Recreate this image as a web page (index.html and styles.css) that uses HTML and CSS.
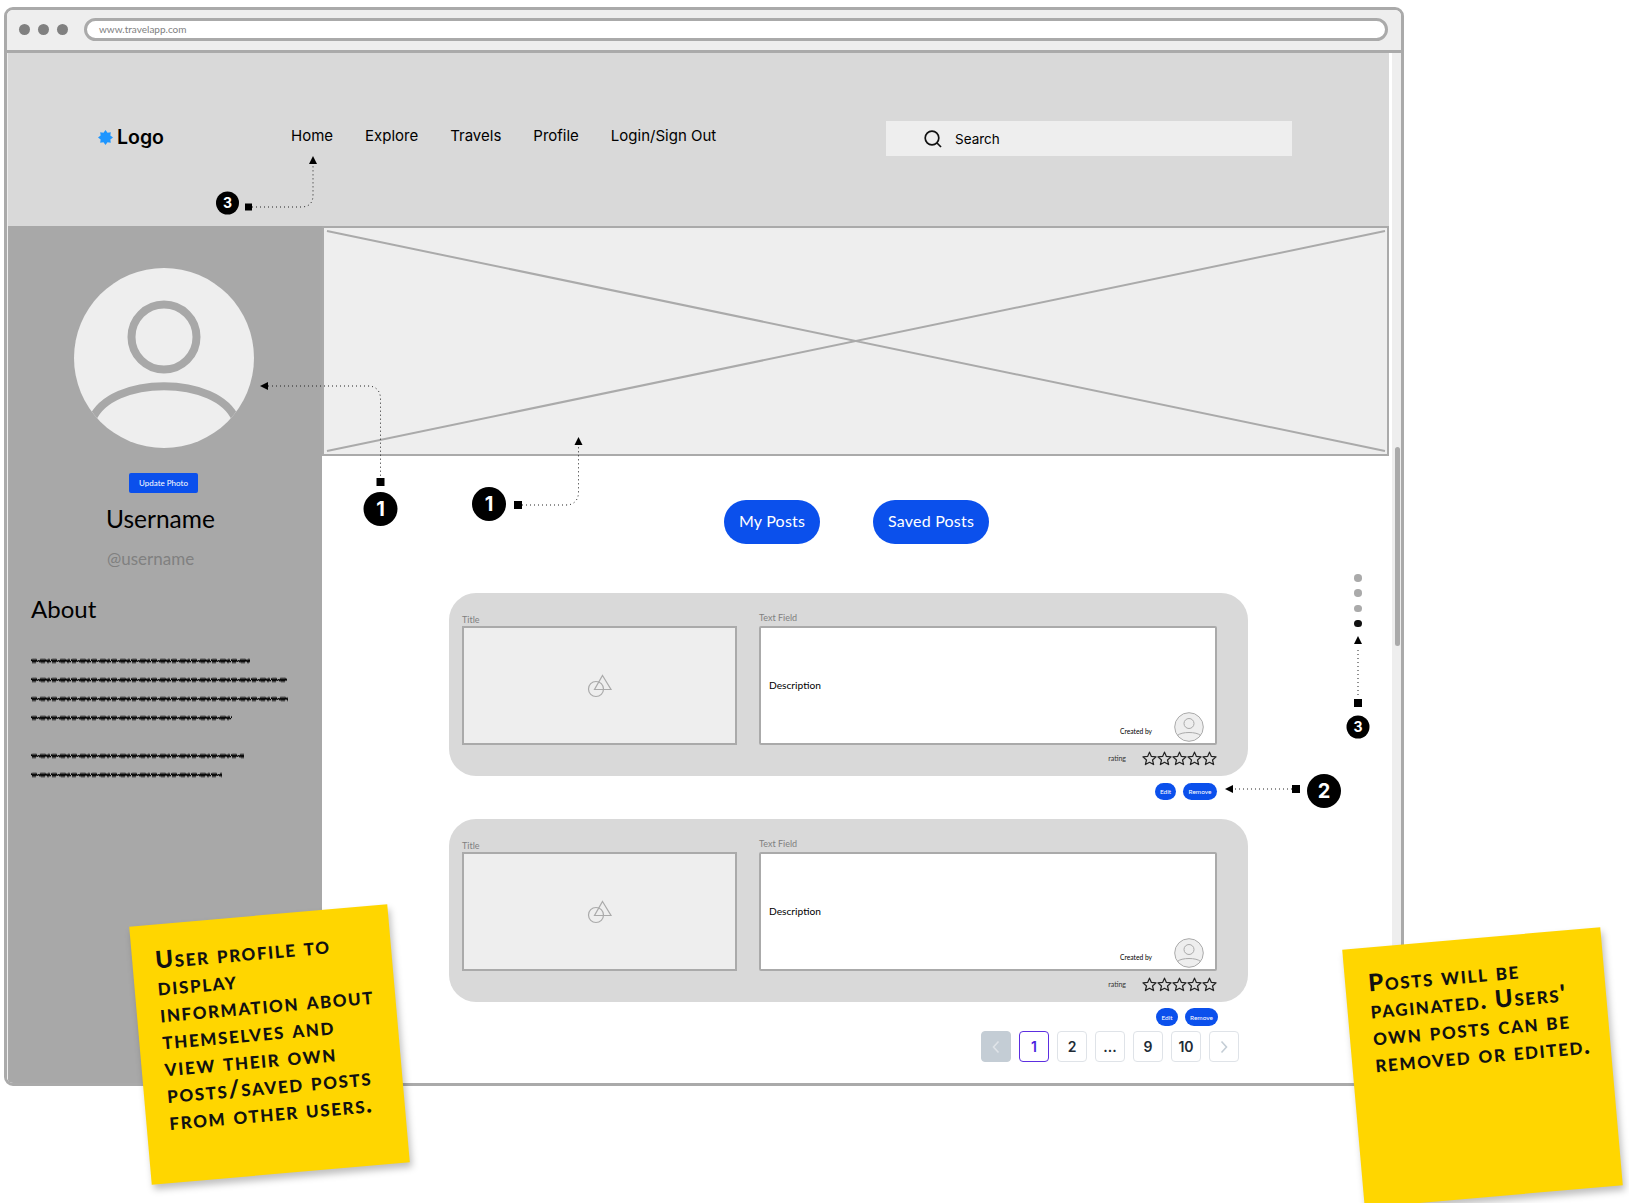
FILE: index.html
```html
<!DOCTYPE html>
<html lang="en">
<head>
    <meta charset="UTF-8">
    <meta name="viewport" content="width=device-width, initial-scale=1.0">
    <title>Travel App Wireframe</title>
    <link rel="stylesheet" href="styles.css">
</head>
<body>
    <svg class="defs" width="0" height="0" aria-hidden="true">
        <defs>
            <pattern id="wave" width="20" height="6" patternUnits="userSpaceOnUse">
                <path d="M0 3l1-1.500 1 3 1-3 1 3 1-3 1 2 2-1 1 1.500 1-2.500 1 3 1-3 1 3 1-3 1 2 1-1.500 1 2.500 1-3 1 2.500 2-1" fill="none" stroke="#000" stroke-width="1.100"/>
            </pattern>
            <symbol id="star" viewBox="0 0 16 16">
                <path d="M8 1.200l2 4.600 5 .5-3.800 3.300 1.200 4.900L8 12l-4.400 2.500 1.200-4.900L1 6.300l5-.5z" fill="none" stroke="#222" stroke-width="1.300" stroke-linejoin="round"/>
            </symbol>
            <symbol id="shapes" viewBox="0 0 26 24">
                <circle cx="9" cy="15" r="7.500" fill="none" stroke="#aaa" stroke-width="1.200"/>
                <path d="M15.500 1.500L24 15.500H7.500z" fill="none" stroke="#aaa" stroke-width="1.200"/>
            </symbol>
            <symbol id="mini-avatar" viewBox="0 0 30 30">
                <circle cx="15" cy="15" r="14.300" fill="#eee" stroke="#aaa" stroke-width="1"/>
                <circle cx="15" cy="11.500" r="5" fill="none" stroke="#aaa" stroke-width="1"/>
                <path d="M3.500 23.500C7 19.500 23 19.500 26.500 23.500" fill="none" stroke="#aaa" stroke-width="1"/>
            </symbol>
        </defs>
    </svg>

    <div class="window">
        <div class="titlebar">
            <span class="dot"></span>
            <span class="dot"></span>
            <span class="dot"></span>
            <div class="urlbar">www.travelapp.com</div>
        </div>
        <div class="viewport">
            <div class="page">
                <header class="site-header">
                    <div class="logo">
                        <svg class="logo-star" viewBox="0 0 16 16" width="15" height="15">
                            <path d="M8 0l2.140 2.830 3.520-.49-.49 3.520L16 8l-2.830 2.140.49 3.520-3.520-.49L8 16l-2.140-2.830-3.520.49.49-3.520L0 8l2.830-2.140-.49-3.520 3.520.49z" fill="#1e96ff"/>
                        </svg>
                        Logo
                    </div>
                    <nav class="main-nav">
                        <a>Home</a>
                        <a>Explore</a>
                        <a>Travels</a>
                        <a>Profile</a>
                        <a>Login/Sign Out</a>
                    </nav>
                    <div class="search">
                        <svg viewBox="0 0 18 18" width="18" height="18">
                            <circle cx="8" cy="8" r="6.800" fill="none" stroke="#111" stroke-width="1.700"/>
                            <path d="M13 13l4 4" stroke="#111" stroke-width="1.700"/>
                        </svg>
                        Search
                    </div>
                </header>
                <div class="page-body">
                    <aside class="sidebar">
                        <svg class="avatar" viewBox="0 0 180 180" width="180" height="180">
                            <defs>
                                <clipPath id="avatar-clip"><circle cx="90" cy="90" r="90"/></clipPath>
                            </defs>
                            <circle cx="90" cy="90" r="90" fill="#eee"/>
                            <circle cx="90" cy="69" r="32.500" fill="none" stroke="#a8a8a8" stroke-width="8"/>
                            <path d="M18 152C36 107 144 107 162 152" fill="none" stroke="#a8a8a8" stroke-width="8" clip-path="url(#avatar-clip)"/>
                        </svg>
                        <button class="update-btn">Update Photo</button>
                        <div class="username">Username</div>
                        <div class="handle">@username</div>
                        <h2 class="about-title">About</h2>
                        <div class="about-text">
                            <svg width="219" height="6"><rect width="219" height="6" fill="url(#wave)"/></svg>
                            <svg width="256" height="6"><rect width="256" height="6" fill="url(#wave)"/></svg>
                            <svg width="257" height="6"><rect width="257" height="6" fill="url(#wave)"/></svg>
                            <svg class="para-end" width="201" height="6"><rect width="201" height="6" fill="url(#wave)"/></svg>
                            <svg width="213" height="6"><rect width="213" height="6" fill="url(#wave)"/></svg>
                            <svg width="191" height="6"><rect width="191" height="6" fill="url(#wave)"/></svg>
                        </div>
                    </aside>
                    <main class="content">
                        <div class="hero">
                            <svg viewBox="0 0 1063 226" width="1063" height="226">
                                <path d="M3 3L1061 223M3 223L1061 3" stroke="#aaa" stroke-width="2"/>
                            </svg>
                        </div>
                        <div class="tabs">
                            <button class="tab">My Posts</button>
                            <button class="tab">Saved Posts</button>
                        </div>
                        <div class="posts">
                            <article class="card">
                                <div class="card-fields">
                                    <div class="field-col image-col">
                                        <label class="field-label">Title</label>
                                        <div class="image-box"><svg width="26" height="24"><use href="#shapes"/></svg></div>
                                    </div>
                                    <div class="field-col text-col">
                                        <label class="field-label text-label">Text Field</label>
                                        <div class="text-box">
                                            <div class="description">Description</div>
                                            <div class="created">
                                                <span>Created by</span>
                                                <svg width="30" height="30"><use href="#mini-avatar"/></svg>
                                            </div>
                                        </div>
                                    </div>
                                </div>
                                <div class="rating">
                                    <span>rating</span>
                                    <div class="stars">
                                        <svg width="15" height="15"><use href="#star"/></svg>
                                        <svg width="15" height="15"><use href="#star"/></svg>
                                        <svg width="15" height="15"><use href="#star"/></svg>
                                        <svg width="15" height="15"><use href="#star"/></svg>
                                        <svg width="15" height="15"><use href="#star"/></svg>
                                    </div>
                                </div>
                            </article>
                            <div class="actions">
                                <button class="mini-btn edit">Edit</button>
                                <button class="mini-btn remove">Remove</button>
                            </div>
                            <article class="card">
                                <div class="card-fields">
                                    <div class="field-col image-col">
                                        <label class="field-label">Title</label>
                                        <div class="image-box"><svg width="26" height="24"><use href="#shapes"/></svg></div>
                                    </div>
                                    <div class="field-col text-col">
                                        <label class="field-label text-label">Text Field</label>
                                        <div class="text-box">
                                            <div class="description">Description</div>
                                            <div class="created">
                                                <span>Created by</span>
                                                <svg width="30" height="30"><use href="#mini-avatar"/></svg>
                                            </div>
                                        </div>
                                    </div>
                                </div>
                                <div class="rating">
                                    <span>rating</span>
                                    <div class="stars">
                                        <svg width="15" height="15"><use href="#star"/></svg>
                                        <svg width="15" height="15"><use href="#star"/></svg>
                                        <svg width="15" height="15"><use href="#star"/></svg>
                                        <svg width="15" height="15"><use href="#star"/></svg>
                                        <svg width="15" height="15"><use href="#star"/></svg>
                                    </div>
                                </div>
                            </article>
                            <div class="actions actions-last">
                                <button class="mini-btn edit">Edit</button>
                                <button class="mini-btn remove">Remove</button>
                            </div>
                            <div class="pagination">
                                <span class="page-item prev"><svg width="8" height="14" viewBox="0 0 8 14"><path d="M6.500 1.500L1.500 7l5 5.500" fill="none" stroke="#dfe3e8" stroke-width="1.600"/></svg></span>
                                <span class="page-item active">1</span>
                                <span class="page-item">2</span>
                                <span class="page-item">...</span>
                                <span class="page-item">9</span>
                                <span class="page-item">10</span>
                                <span class="page-item"><svg width="8" height="14" viewBox="0 0 8 14"><path d="M1.500 1.500L6.500 7l-5 5.500" fill="none" stroke="#c4cdd5" stroke-width="1.600"/></svg></span>
                            </div>
                        </div>
                        <div class="carousel-dots">
                            <span></span><span></span><span></span><span class="current"></span>
                        </div>
                    </main>
                </div>
            </div>
            <div class="scrollbar"><div class="thumb"></div></div>
        </div>
    </div>

    <!-- annotations drawn over the wireframe -->
    <svg class="annotations" viewBox="0 0 1629 1203" width="1629" height="1203">
        <g fill="none" stroke="#222" stroke-width="1" stroke-dasharray="1 3">
            <path d="M252 207H301C309 207 313 203 313 195V164"/>
            <path d="M268 386H368C376 386 380.500 391 380.500 399V478"/>
            <path d="M522 505H566C574 505 578.500 500 578.500 492V446"/>
            <path d="M1358 695V648"/>
            <path d="M1292 789H1233"/>
        </g>
        <g fill="#000">
            <path d="M313 156l4 8h-8z"/>
            <path d="M260 386l8-4v8z"/>
            <path d="M578.500 437l4 8h-8z"/>
            <path d="M1358 636l4 8h-8z"/>
            <path d="M1225 789l8-4v8z"/>
            <rect x="245" y="203.500" width="7" height="7"/>
            <rect x="376.500" y="478" width="8" height="8"/>
            <rect x="514" y="501" width="8" height="8"/>
            <rect x="1354" y="699" width="8" height="8"/>
            <rect x="1292" y="785" width="8" height="8"/>
            <circle cx="227.500" cy="203" r="11.500"/>
            <circle cx="380.500" cy="509" r="17"/>
            <circle cx="489" cy="504" r="17"/>
            <circle cx="1358" cy="727" r="11.500"/>
            <circle cx="1324" cy="791" r="17"/>
        </g>
        <g class="badge-text">
            <text class="small" x="227.500" y="208">3</text>
            <text x="380.500" y="516">1</text>
            <text x="489" y="511">1</text>
            <text class="small" x="1358" y="732">3</text>
            <text x="1324" y="798">2</text>
        </g>
    </svg>

    <div class="note note-profile">
        User profile to<br>display<br>information about<br>themselves and<br>view their own<br>posts/saved posts<br>from other users.
    </div>
    <div class="note note-posts">
        Posts will be<br>paginated. Users'<br>own posts can be<br>removed or edited.
    </div>
</body>
</html>
```

FILE: styles.css
```css
* {
    box-sizing: border-box;
}
body {
    margin: 0;
    width: 1629px;
    height: 1203px;
    position: relative;
    overflow: hidden;
    background-color: #fff;
    color: #000;
    font-family: Lato, "Noto Sans", sans-serif;
}
button {
    font-family: inherit;
    border: 0;
    padding: 0;
    color: #fff;
    background-color: #0b50ec;
}
.defs {
    position: absolute;
}

/* browser frame */
.window {
    width: 1400px;
    height: 1079px;
    margin: 7px 0 0 4px;
    border: 3px solid #aaa;
    border-radius: 9px;
    overflow: hidden;
    display: flex;
    flex-direction: column;
    position: absolute;
}
.titlebar {
    height: 43px;
    flex: none;
    display: flex;
    align-items: flex-start;
    gap: 8px;
    padding: 14px 0 0 12px;
    background-color: #eee;
    border-bottom: 3px solid #aaa;
}
.dot {
    width: 11px;
    height: 11px;
    border-radius: 50%;
    background-color: #808080;
}
.urlbar {
    width: 1304px;
    height: 23px;
    margin: -6px 0 0 8px;
    padding-left: 12px;
    border: 3px solid #aaa;
    border-radius: 12px;
    background-color: #fff;
    color: #808080;
    font-size: 10px;
    line-height: 17px;
}
.viewport {
    flex: 1;
    display: flex;
    min-height: 0;
}
.page {
    width: 1382px;
    display: flex;
    flex-direction: column;
    border-left: 1px solid #eee;
}
.scrollbar {
    width: 9px;
    margin-left: 3px;
    padding: 394px 0 0 3px;
    background-color: #eee;
}
.thumb {
    width: 5px;
    height: 199px;
    border-radius: 3px;
    background-color: #aaa;
}

/* header */
.site-header {
    height: 173px;
    flex: none;
    display: flex;
    align-items: flex-start;
    padding: 68px 97px 0 90px;
    background-color: #d9d9d9;
}
.logo {
    display: flex;
    align-items: center;
    gap: 4px;
    font-family: Inter, sans-serif;
    font-size: 19.500px;
    font-weight: 600;
    line-height: 32px;
}
.main-nav {
    display: flex;
    gap: 32px;
    margin: 1px 0 0 127px;
    font-family: Inter, sans-serif;
    font-size: 15px;
    line-height: 28px;
}
.search {
    width: 406px;
    height: 35px;
    margin-left: auto;
    display: flex;
    align-items: center;
    gap: 13px;
    padding-left: 38px;
    background-color: #eee;
    font-family: Inter, sans-serif;
    font-size: 13.500px;
}

/* sidebar */
.page-body {
    flex: 1;
    display: flex;
    min-height: 0;
}
.sidebar {
    width: 314px;
    flex: none;
    background-color: #a8a8a8;
    padding-top: 42px;
}
.avatar {
    display: block;
    margin-left: 66px;
}
.update-btn {
    display: block;
    width: 69px;
    height: 20px;
    margin: 25px 0 0 121px;
    border-radius: 2px;
    font-size: 8px;
}
.username {
    margin: 11px 0 0 98px;
    font-size: 24.500px;
    line-height: 30px;
}
.handle {
    margin: 14px 0 0 99px;
    font-size: 17px;
    line-height: 22px;
    color: #808080;
}
.about-title {
    margin: 23px 0 0 23px;
    font-size: 24px;
    font-weight: 400;
    line-height: 32px;
}
.about-text {
    margin: 33px 0 0 23px;
}
.about-text svg {
    display: block;
    margin-bottom: 13px;
}
.about-text .para-end {
    margin-bottom: 32px;
}

/* main column */
.content {
    flex: 1;
    position: relative;
    background-color: #fff;
}
.hero {
    height: 230px;
    border: 2px solid #aaa;
    background-color: #eee;
}
.hero svg {
    display: block;
}
.tabs {
    display: flex;
    gap: 53px;
    margin: 44px 0 0 402px;
}
.tab {
    height: 44px;
    padding: 0 15px 3px;
    border-radius: 22px;
    font-size: 16px;
    letter-spacing: 0.2px;
}
.posts {
    margin: 49px 0 0 127px;
}
.card {
    width: 799px;
    height: 183px;
    padding: 20px 31px 0 13px;
    border-radius: 27px;
    background-color: #d9d9d9;
}
.card-fields {
    display: flex;
    gap: 22px;
}
.field-col {
    display: flex;
    flex-direction: column;
}
.image-col {
    width: 275px;
}
.text-col {
    width: 458px;
}
.field-label {
    font-size: 9px;
    line-height: 13px;
    color: #808080;
}
.text-label {
    line-height: 10px;
    padding-bottom: 3px;
}
.image-box {
    height: 119px;
    display: flex;
    align-items: center;
    justify-content: center;
    border: 2px solid #aaa;
    background-color: #eee;
}
.text-box {
    height: 119px;
    padding: 50px 11px 0 8px;
    border: 2px solid #aaa;
    border-radius: 2px;
    background-color: #fff;
}
.description {
    font-size: 10.200px;
    line-height: 14px;
}
.created {
    display: flex;
    justify-content: flex-end;
    gap: 22px;
    margin-top: 20px;
    font-size: 6.700px;
    line-height: 10px;
}
.created span {
    margin-top: 14px;
}
.rating {
    display: flex;
    justify-content: flex-end;
    align-items: center;
    gap: 16px;
    height: 12px;
    margin-top: 7px;
    font-size: 7px;
    color: #333;
}
.stars {
    display: flex;
}
.stars svg {
    display: block;
}
.actions {
    width: 799px;
    height: 17px;
    margin: 7px 0 19px;
    padding-right: 31px;
    display: flex;
    justify-content: flex-end;
    gap: 7px;
}
.actions-last {
    height: 18px;
    margin: 6px 0 5px;
    padding-right: 30px;
}
.mini-btn {
    height: 100%;
    border-radius: 9px;
    font-size: 6.500px;
}
.edit {
    width: 21px;
}
.remove {
    width: 34px;
}
.actions-last .edit {
    width: 22px;
}
.actions-last .remove {
    width: 33px;
}
.pagination {
    display: flex;
    gap: 8px;
    margin-left: 532px;
}
.page-item {
    width: 30px;
    height: 31px;
    display: flex;
    align-items: center;
    justify-content: center;
    border: 1px solid #dfe3e8;
    border-radius: 4px;
    font-family: Inter, sans-serif;
    font-size: 14px;
    font-weight: 600;
    color: #212b36;
}
.prev {
    background-color: #c4cdd5;
    border-color: #c4cdd5;
}
.active {
    border-color: #5c2ee0;
    color: #4a1fe0;
}
.carousel-dots {
    position: absolute;
    left: 1032px;
    top: 348px;
    display: flex;
    flex-direction: column;
    gap: 7.800px;
}
.carousel-dots span {
    width: 7.500px;
    height: 7.500px;
    border-radius: 50%;
    background-color: #aaa;
}
.carousel-dots .current {
    background-color: #111;
}

/* annotations and sticky notes */
.annotations {
    position: absolute;
    left: 0;
    top: 0;
}
.badge-text text {
    fill: #fff;
    font-family: Inter, sans-serif;
    font-size: 20px;
    font-weight: 700;
    text-anchor: middle;
}
.badge-text .small {
    font-size: 14px;
}
.note {
    position: absolute;
    width: 259px;
    height: 259px;
    padding: 21px 0 0 23px;
    background-color: #ffd600;
    box-shadow: 2px 5px 7px rgba(0, 0, 0, 0.25);
    transform: rotate(-5deg);
    font-family: Lato, sans-serif;
    font-size: 24px;
    font-weight: 900;
    font-variant: small-caps;
    letter-spacing: 1.600px;
    line-height: 27px;
    color: #111;
    white-space: nowrap;
}
.note-profile {
    left: 139.500px;
    top: 914.500px;
}
.note-posts {
    left: 1352.500px;
    top: 938px;
}
```
